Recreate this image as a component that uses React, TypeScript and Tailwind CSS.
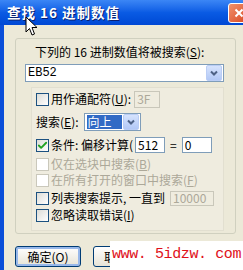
import { Check } from "lucide-react";

const cjk = { fontFamily: '"Noto Sans CJK SC", "Liberation Sans", sans-serif' };

const Box = ({ checked, disabled }: { checked?: boolean; disabled?: boolean }) => (
  <div
    className={`w-[13px] h-[13px] shrink-0 border flex items-center justify-center ${
      disabled
        ? "border-[#cac8bb] bg-white"
        : "border-[#1c5180] bg-gradient-to-br from-[#dcdcd7] to-white"
    }`}
  >
    {checked && <Check className="w-[11px] h-[11px] text-[#21a121]" strokeWidth={4} />}
  </div>
);

const XpButton = ({ label, focused }: { label: string; focused?: boolean }) => (
  <div
    className={`w-[66px] h-[21px] rounded-[3px] border border-[#003c74] bg-gradient-to-b from-white to-[#e6e3d6] flex items-center justify-center text-[12px] text-black ${
      focused ? "shadow-[inset_0_0_0_2px_#98b8ea]" : ""
    }`}
  >
    {label}
  </div>
);

const DropArrow = () => (
  <div className="w-[16px] h-[16px] rounded-[2px] bg-gradient-to-b from-[#d6e3fd] to-[#b2c8f6] border border-[#bacdf5] flex items-center justify-center">
    <svg width="8" height="6" viewBox="0 0 8 6">
      <path d="M1 1.5 L4 4.5 L7 1.5" stroke="#4d6185" strokeWidth="2" fill="none" />
    </svg>
  </div>
);

export default function App() {
  return (
    <div className="relative w-[243px] h-[270px] overflow-hidden bg-[#ece9d8] text-[12px] text-black" style={cjk}>
      {/* Title bar */}
      <div className="h-[25px] flex items-center justify-between bg-gradient-to-b from-[#3b86f5] via-[#0a5be4] to-[#0048d4]">
        <div className="pl-[7px] text-white font-bold text-[13.5px] tracking-[1px] [text-shadow:1px_1px_0_#0a1f70]">
          查找 16 进制数值
        </div>
        <div className="w-[21px] h-[20px] mr-[-6px] rounded-[3px] border border-white bg-gradient-to-br from-[#f0916c] to-[#d8451c] flex items-center justify-center">
          <svg width="10" height="10" viewBox="0 0 10 10">
            <path d="M1.5 1.5 L8.5 8.5 M8.5 1.5 L1.5 8.5" stroke="white" strokeWidth="2" />
          </svg>
        </div>
      </div>

      <div className="flex h-[245px]">
        <div className="w-[4px] bg-[#0a4ed9]" />
        <div className="flex-1 flex flex-col">
          {/* Outer group */}
          <div className="ml-[11px] mt-[13px] w-[221px] h-[196px] border border-[#d0d0bf] rounded-[3px] flex flex-col">
            <div className="h-[18px] mt-[4px] pl-[19px] flex items-center">下列的 16 进制数值将被搜索(<u>S</u>):</div>
            <div className="ml-[9px] mt-[3px] w-[199px] h-[18px] bg-white border border-[#7f9db9] flex items-center justify-between pl-[2px] pr-[1px]">
              <span className="text-[12px]" style={{ fontFamily: '"Liberation Mono", monospace' }}>EB52</span>
              <DropArrow />
            </div>

            {/* Inner group */}
            <div className="ml-[15px] mt-[5px] w-[193px] h-[144px] border border-[#e2dfd0] bg-[#efecdf] flex flex-col pl-[4px] pt-[2px]">
              <div className="h-[18px] flex items-center gap-[2px]">
                <Box />
                <span>用作通配符(<u>U</u>):</span>
                <div className="ml-[1px] w-[26px] h-[17px] border border-[#c9c7ba] text-[#aca899] flex items-center pl-[2px]">3F</div>
              </div>
              <div className="h-[18px] mt-[5px] flex items-center">
                <span>搜索(<u>E</u>):</span>
                <div className="ml-[5px] w-[57px] h-[18px] bg-white border border-[#7f9db9] flex items-center justify-between pl-[2px] pr-[1px]">
                  <span className="bg-[#316ac5] text-white px-[1px] h-[14px] flex items-center w-[35px]">向上</span>
                  <DropArrow />
                </div>
              </div>
              <div className="h-[18px] mt-[5px] flex items-center gap-[2px]">
                <Box checked />
                <span>条件: 偏移计算(</span>
                <div className="w-[30px] h-[16px] bg-white border border-[#7f9db9] flex items-center pl-[2px]">512</div>
                <span className="mx-[3px]">=</span>
                <div className="w-[30px] h-[16px] bg-white border border-[#7f9db9] flex items-center pl-[2px]">0</div>
              </div>
              <div className="h-[16px] mt-[2px] flex items-center gap-[2px] text-[#aca899]">
                <Box disabled />
                <span>仅在选块中搜索(<u>B</u>)</span>
              </div>
              <div className="h-[16px] flex items-center gap-[2px] text-[#aca899]">
                <Box disabled />
                <span>在所有打开的窗口中搜索(<u>F</u>)</span>
              </div>
              <div className="h-[16px] mt-[2px] flex items-center gap-[2px]">
                <Box />
                <span>列表搜索提示, 一直到</span>
                <div className="ml-[3px] w-[44px] h-[15px] border border-[#c9c7ba] text-[#aca899] flex items-center pl-[2px]">10000</div>
              </div>
              <div className="h-[16px] mt-[1px] flex items-center gap-[2px]">
                <Box />
                <span>忽略读取错误(<u>I</u>)</span>
              </div>
            </div>
          </div>

          {/* Buttons */}
          <div className="ml-[11px] mt-[12px] flex gap-[12px]">
            <XpButton label="确定(O)" focused />
            <div className="w-[66px] h-[21px] rounded-[3px] border border-[#003c74] bg-gradient-to-b from-white to-[#e6e3d6] flex items-center pl-[10px] text-[12px]">
              取
            </div>
          </div>
        </div>
      </div>

      {/* Watermark */}
      <div
        className="absolute left-[110px] top-[241px] w-[133px] h-[29px] bg-white text-[#e0101a] text-[15px] tracking-[-0.4px] flex items-center pl-[2px] whitespace-pre"
        style={{ fontFamily: '"Liberation Mono", monospace' }}
      >
        www. 5idzw. com
      </div>

      {/* Mouse pointer */}
      <svg className="absolute left-[25px] top-[16px]" width="13" height="21" viewBox="0 0 13 21">
        <path d="M1 1 L1 16 L4.5 12.5 L7 19 L9.5 18 L7 11.5 L12 11.5 Z" fill="white" stroke="black" strokeWidth="1" />
      </svg>
    </div>
  );
}
